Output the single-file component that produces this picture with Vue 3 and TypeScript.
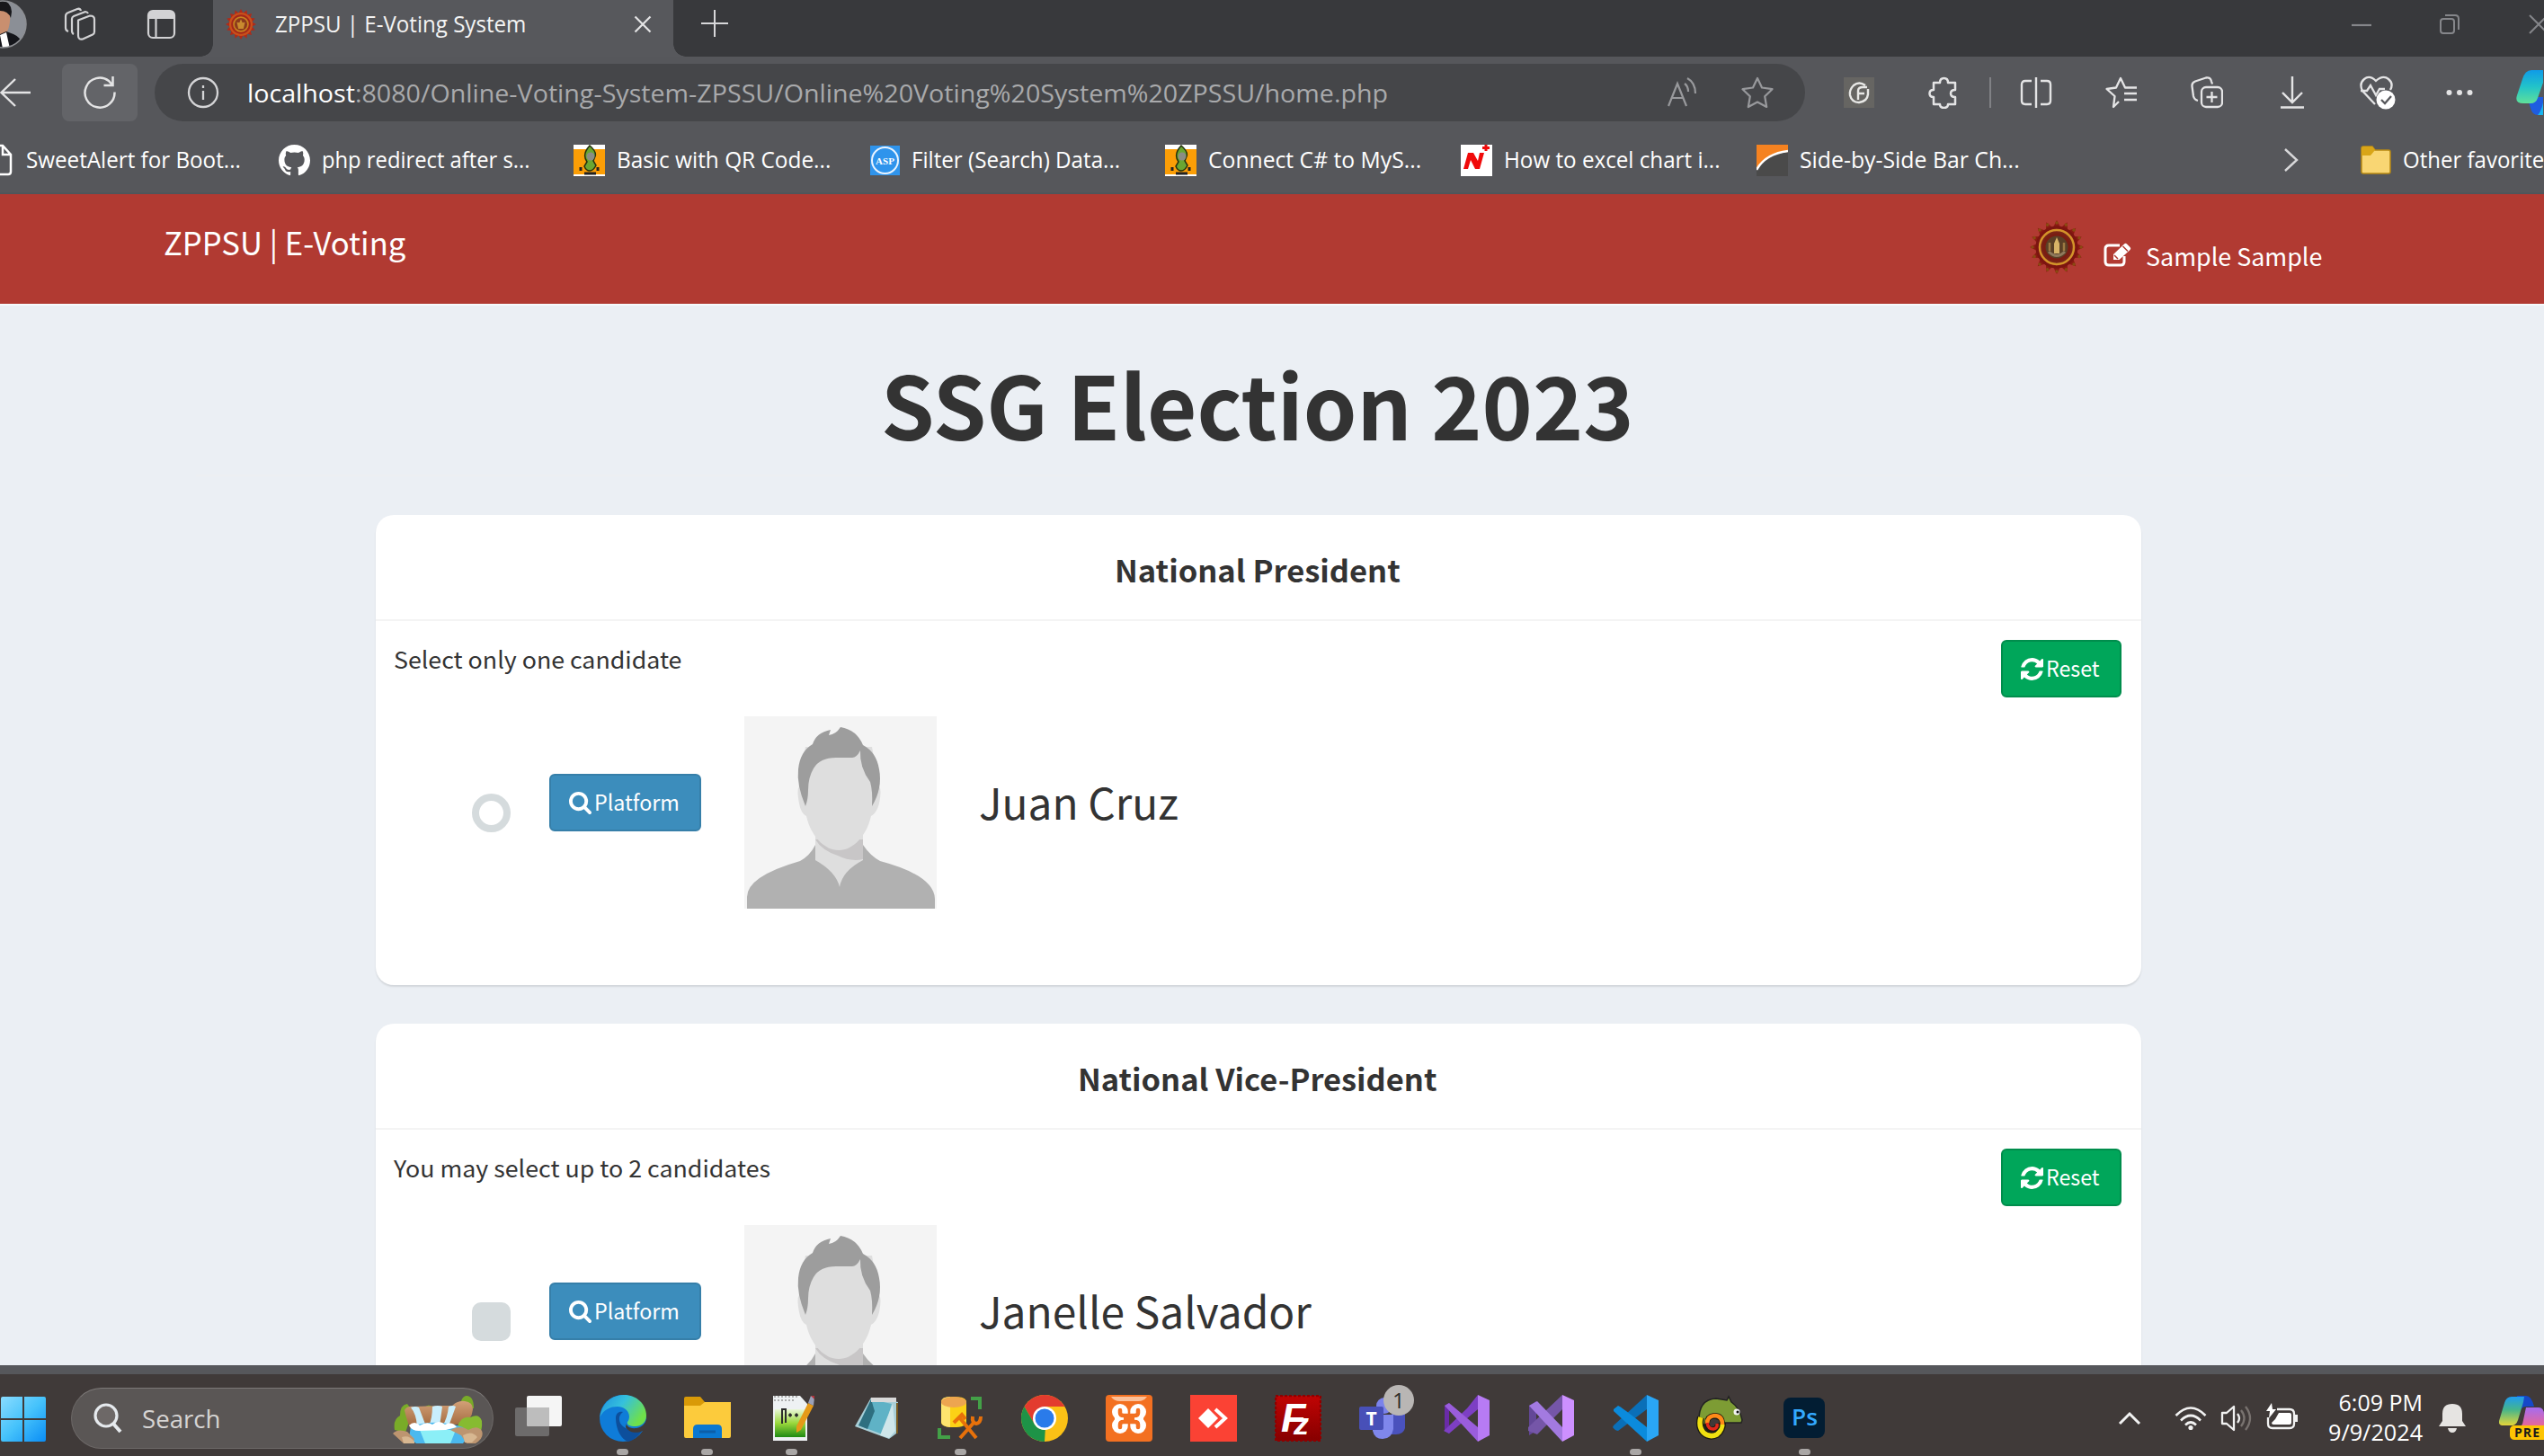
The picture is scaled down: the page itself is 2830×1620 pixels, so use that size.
<script setup lang="ts">
interface Bookmark {
  icon: string
  label: string
  width: number
  gap: number
}

interface Position {
  title: string
  titleWidth: number
  hint: string
  hintWidth: number
  candidate: string
  nameWidth: number
  multiple: boolean
}

const bookmarks: Bookmark[] = [
  { icon: 'doc', label: 'SweetAlert for Boot...', width: 239, gap: 42 },
  { icon: 'github', label: 'php redirect after s...', width: 232, gap: 49 },
  { icon: 'source', label: 'Basic with QR Code...', width: 238, gap: 43 },
  { icon: 'asp', label: 'Filter (Search) Data...', width: 232, gap: 50 },
  { icon: 'source', label: 'Connect C# to MyS...', width: 237, gap: 44 },
  { icon: 'news', label: 'How to excel chart i...', width: 241, gap: 40 },
  { icon: 'bars', label: 'Side-by-Side Bar Ch...', width: 245, gap: 0 },
]

const positions: Position[] = [
  {
    title: 'National President',
    titleWidth: 318,
    hint: 'Select only one candidate',
    hintWidth: 320,
    candidate: 'Juan Cruz',
    nameWidth: 222,
    multiple: false,
  },
  {
    title: 'National Vice-President',
    titleWidth: 399,
    hint: 'You may select up to 2 candidates',
    hintWidth: 419,
    candidate: 'Janelle Salvador',
    nameWidth: 370,
    multiple: true,
  },
]

const cogTeeth = Array.from({ length: 16 }, (_, i) => i * 22.5)

// Condenses or widens a label so that it takes exactly the given width.
const vFit = {
  mounted(el: HTMLElement, binding: { value: number }) {
    const natural = el.offsetWidth
    if (!natural) return
    el.style.transform = `scaleX(${binding.value / natural})`
    el.style.marginRight = `${binding.value - natural}px`
  },
}
</script>

<template>
  <div class="screen">
    <!-- tab strip -->
    <div class="tabstrip">
      <svg class="avatar" width="34" height="56" viewBox="0 0 34 56">
        <defs><clipPath id="av"><circle cx="3" cy="28" r="26" /></clipPath></defs>
        <g clip-path="url(#av)">
          <rect width="34" height="56" fill="#8b8f96" />
          <path d="M0 4q10 0 11 12q1 12-3 20l-8 6z" fill="#c98f6f" />
          <path d="M0 2q12-1 13 12l-1 7q-3-8-12-8z" fill="#17171a" />
          <path d="M0 39l7-3 8 3q10 4 12 17H0z" fill="#15161b" />
          <path d="M0 40l7-3 4 18H3z" fill="#fff" />
        </g>
        <circle cx="3" cy="28" r="26" fill="none" stroke="#8d8f93" stroke-width="1.5" />
      </svg>
      <svg class="ts-work" width="38" height="38" viewBox="0 0 38 38" fill="none" stroke="#d2d2d4" stroke-width="2.2" stroke-linejoin="round">
        <path d="M17 14.500l13-5q5 0 5 4v14q0 2-2 3l-11 5q-5 1-5-4z" />
        <path d="M12 30q-2-1-2-4V13q0-2 2-3l13-5q2 0 3 2" />
        <path d="M6 27q-3-1-3-4V10q0-3 3-4l10-4q3-1 4 2" />
      </svg>
      <svg class="ts-side" width="34" height="34" viewBox="0 0 34 34">
        <rect x="2" y="2" width="29" height="30" rx="5" fill="none" stroke="#d2d2d4" stroke-width="2.2" />
        <path d="M2 11V7q0-5 5-5h19q5 0 5 5v4z" fill="#d2d2d4" />
        <path d="M10.500 11v21" stroke="#d2d2d4" stroke-width="2.200" />
      </svg>
      <div class="tab">
        <svg class="favicon" width="34" height="34" viewBox="-30 -30 60 60">
          <path v-for="a in cogTeeth" :key="a" d="M-5-21L0-30 5-21z" fill="#b02a18" :transform="`rotate(${a})`" />
          <circle r="21" fill="#a3271a" stroke="#c8501b" stroke-width="4" />
          <circle r="14" fill="#8b3a1c" stroke="#c8821f" stroke-width="3" />
          <path d="M-5 9L-8-4-3-3 0-10 3-3 8-4 5 9z" fill="#c98b2f" />
        </svg>
        <span v-fit="279" class="tab-title">ZPPSU | E-Voting System</span>
        <svg class="tab-close" width="20" height="20" viewBox="0 0 20 20" stroke="#e4e4e5" stroke-width="2.2"><path d="M1.500 1.500l17 17M18.500 1.500l-17 17" /></svg>
      </div>
      <svg class="ts-plus" width="30" height="30" viewBox="0 0 30 30" stroke="#d8d8da" stroke-width="2"><path d="M0 15h30M15 0v30" /></svg>
      <div class="win">
        <svg width="22" height="24" viewBox="0 0 22 24" stroke="#85868a" stroke-width="2.200"><path d="M0 13h22" /></svg>
        <svg width="24" height="24" viewBox="0 0 24 24" fill="none" stroke="#85868a" stroke-width="2"><rect x="2" y="6" width="15" height="16" rx="3" /><path d="M7 2h11q4 0 4 4v12" /></svg>
        <svg width="24" height="24" viewBox="0 0 24 24" stroke="#85868a" stroke-width="2"><path d="M2 2l20 20M22 2L2 22" /></svg>
      </div>
    </div>

    <!-- address row -->
    <div class="toolbar">
      <svg class="back" width="34" height="34" viewBox="0 0 34 34" fill="none" stroke="#e4e4e5" stroke-width="2.400"><path d="M34 17H1M17 2L1.500 17 17 32" /></svg>
      <div class="reload">
        <svg width="38" height="38" viewBox="0 0 38 38" fill="none" stroke="#e4e4e5" stroke-width="2.500"><path d="M35.500 18.500A16.500 16.500 0 1 1 29 6l4 4.500M33.500 1v10H23.500" /></svg>
      </div>
      <div class="address">
        <svg class="info" width="36" height="36" viewBox="0 0 36 36" fill="none" stroke="#d5d5d7" stroke-width="2.300"><circle cx="18" cy="18" r="16" /><path d="M18 16v10M18 10v3" /></svg>
        <span v-fit="1269" class="url"><b>localhost</b>:8080/Online-Voting-System-ZPSSU/Online%20Voting%20System%20ZPSSU/home.php</span>
        <svg class="aloud" width="34" height="34" viewBox="0 0 34 34" fill="none" stroke="#98999c" stroke-width="2.200"><path d="M1 32L11 7l10 25M5 23h12M19 7q4 3 4 9M22 1q9 5 9 17" /></svg>
        <svg class="star" width="36" height="36" viewBox="0 0 36 36" fill="none" stroke="#98999c" stroke-width="2.200" stroke-linejoin="round"><path d="M18 2l5 10.500 11.500 1.700-8.300 8 2 11.800L18 28.500 7.800 34l2-11.800-8.300-8L13 12.500z" /></svg>
      </div>
      <div class="tools">
        <div class="tool"><svg width="34" height="34" viewBox="0 0 34 34"><rect width="34" height="34" fill="#666562" /><path d="M24 9Q17 4 11 9q-5 5-4 11 2 8 10 8 9-1 10-9v-6M16 25V15q0-4 5-4h5M16 18h7" fill="none" stroke="#e8e8e6" stroke-width="2.400" /></svg></div>
        <div class="tool"><svg width="36" height="36" viewBox="0 0 36 36" fill="none" stroke="#e4e4e5" stroke-width="2.500" stroke-linejoin="round"><path d="M6 7h7q0-5 4.500-5T22 7h8v8q-5 0-5 4t5 4v8h-8q0 4-4.500 4T13 31H6v-8q-4.500 0-4.500-4T6 15z" /></svg></div>
        <div class="vsep"></div>
        <div class="tool"><svg width="36" height="36" viewBox="0 0 36 36" fill="none" stroke="#e4e4e5" stroke-width="2.400"><path d="M13 5H6Q2 5 2 9v18q0 4 4 4h7M18 1v34M23 5h7q4 0 4 4v18q0 4-4 4h-7" /></svg></div>
        <div class="tool"><svg width="38" height="36" viewBox="0 0 38 36" fill="none" stroke="#e4e4e5" stroke-width="2.300" stroke-linejoin="round"><path d="M16 28l-6 6 1.500-12-9-8L13 12.500 18 2l5 10.500h13M22 19h14M22 26h14" /></svg></div>
        <div class="tool"><svg width="36" height="36" viewBox="0 0 36 36" fill="none" stroke="#e4e4e5" stroke-width="2.300"><rect x="12" y="12" width="23" height="22" rx="5" /><path d="M23.500 17v12M17.500 23h12M8 27q-4-1-5-5L1.500 11Q1 7 5 5.500L17 1.500q5-1 6 4l1 3" /></svg></div>
        <div class="tool"><svg width="28" height="36" viewBox="0 0 28 36" fill="none" stroke="#e4e4e5" stroke-width="2.400"><path d="M14 0v29M3 18l11 11 11-11M1 34.500h26" /></svg></div>
        <div class="tool"><svg width="40" height="38" viewBox="0 0 40 38" fill="none" stroke="#e4e4e5" stroke-width="2.300"><path d="M17 32L3 17q-4-8 2-13t13 2q8-7 14-2t2 12" /><path d="M1 17h7l4-6 6 11 4-7h6" /><circle cx="29" cy="27" r="10.500" fill="#fff" stroke="none" /><path d="M24 27l4 4 7-8" stroke="#57585c" /></svg></div>
        <div class="tool last"><svg width="30" height="8" viewBox="0 0 30 8" fill="#e4e4e5"><circle cx="3.500" cy="4" r="3" /><circle cx="15" cy="4" r="3" /><circle cx="26.500" cy="4" r="3" /></svg></div>
        <svg class="copilot" width="30" height="50" viewBox="0 0 30 50">
          <defs>
            <linearGradient id="cp1" x1="0" y1="0" x2="0" y2="1"><stop offset="0" stop-color="#0f9be8" /><stop offset=".5" stop-color="#22c3c9" /><stop offset="1" stop-color="#5fe09a" /></linearGradient>
          </defs>
          <path d="M12 30h18v20h-6q-6 0-8-8z" fill="#1f5de0" /><path d="M24 50q4-4 6-14v14z" fill="#18b6ee" />
          <path d="M30 0H17Q10 0 7 10L1 28q-3 9 7 9h8q6 0 8-6l6-17z" fill="url(#cp1)" />
        </svg>
      </div>
    </div>

    <!-- bookmarks -->
    <div class="bookmarks">
      <template v-for="(b, i) in bookmarks" :key="i">
        <svg v-if="b.icon === 'doc'" class="bm-icon" width="16" height="36" viewBox="0 0 16 36" fill="none" stroke="#fff" stroke-width="2.500"><path d="M0 2h3l9 10v19q0 3-3 3H0M3 2v10h9" /></svg>
        <svg v-else-if="b.icon === 'github'" class="bm-icon" width="35" height="35" viewBox="0 0 16 16" fill="#fff"><path d="M8 0C3.580 0 0 3.580 0 8c0 3.540 2.290 6.530 5.470 7.590.4.070.55-.17.55-.38 0-.19-.01-.82-.01-1.490-2.010.37-2.530-.49-2.690-.94-.09-.23-.48-.94-.82-1.130-.28-.15-.68-.52-.01-.53.63-.01 1.080.58 1.230.82.72 1.210 1.870.87 2.330.66.070-.52.28-.87.51-1.070-1.780-.2-3.640-.89-3.640-3.950 0-.87.31-1.590.82-2.150-.08-.2-.36-1.020.08-2.120 0 0 .67-.21 2.200.82.64-.18 1.320-.27 2-.27s1.360.09 2 .27c1.530-1.040 2.200-.82 2.200-.82.44 1.100.16 1.920.08 2.120.51.56.82 1.270.82 2.150 0 3.070-1.870 3.750-3.650 3.950.29.25.54.73.54 1.480 0 1.070-.01 1.930-.01 2.200 0 .21.15.46.55.38A8.010 8.010 0 0 0 16 8c0-4.420-3.580-8-8-8z" /></svg>
        <svg v-else-if="b.icon === 'source'" class="bm-icon" width="35" height="35" viewBox="0 0 35 35">
          <rect width="35" height="35" fill="#fb9e06" /><path d="M0 0h35v5H0zM0 33h35v2H0z" fill="#fff" />
          <path d="M18 1q8 7 6 12l-2 5 3 5q-3 6-7 6t-6-5l3-5q-6-8 3-18z" fill="#6aa632" stroke="#23300f" stroke-width="1.500" />
          <circle cx="19" cy="13" r="4.500" fill="#8b8d84" /><path d="M8 25v4M27 25v4M12 32h13" stroke="#222" stroke-width="3" />
        </svg>
        <svg v-else-if="b.icon === 'asp'" class="bm-icon" width="33" height="33" viewBox="0 0 33 33"><rect width="33" height="33" fill="#2f94ec" /><circle cx="16.500" cy="16.500" r="14.500" fill="none" stroke="#e9f4ff" stroke-width="2" /><text x="16.500" y="20.500" text-anchor="middle" font-family="Liberation Serif, serif" font-weight="700" font-size="11" fill="#fff">ASP</text></svg>
        <svg v-else-if="b.icon === 'news'" class="bm-icon" width="35" height="35" viewBox="0 0 35 35"><rect width="35" height="35" fill="#fff" /><path d="M3 27L8 9h6l5 9 2-9h5l-5 18h-5l-5-10-3 10z" fill="#f00a0a" /><path d="M28 0v7M24 3.500h8" stroke="#f00a0a" stroke-width="3" /></svg>
        <svg v-else class="bm-icon" width="35" height="35" viewBox="0 0 35 35"><rect width="35" height="35" fill="#4a4a4a" /><path d="M0 0h35v8Q12 10 0 28z" fill="#f58220" /><path d="M0 28Q10 10 35 7" fill="none" stroke="#fff" stroke-width="2.500" /></svg>
        <span v-fit="b.width" class="bm-label">{{ b.label }}</span>
        <i class="bm-gap" :style="{ width: b.gap + 'px' }"></i>
      </template>
      <svg class="bm-more" width="18" height="28" viewBox="0 0 18 28" fill="none" stroke="#d8d8da" stroke-width="2.400"><path d="M2 2l13 12L2 26" /></svg>
      <div class="bm-sep"></div>
      <svg class="bm-folder" width="34" height="32" viewBox="0 0 34 32"><path d="M1 3q0-2 2-2h10l3 4h15q2 0 2 2v22q0 2-2 2H3q-2 0-2-2z" fill="#f9d673" stroke="#b98b13" stroke-width="1.500" /><path d="M1 3q0-2 2-2h10l3 4-5 6H1z" fill="#d9a517" /></svg>
      <span v-fit="169" class="bm-label">Other favorites</span>
    </div>

    <!-- page -->
    <div class="page">
      <header class="navbar">
        <span v-fit="269" class="brand">ZPPSU | E-Voting</span>
        <svg class="seal" width="60" height="60" viewBox="-30 -30 60 60">
          <g v-for="a in cogTeeth" :key="a" :transform="`rotate(${a})`"><path d="M-4-22L0-30 4-22z" fill="#8a1a12" /><circle cy="-27" r="1.800" fill="#8a4a12" /></g>
          <circle r="22" fill="#8d1c14" stroke="#7c1510" stroke-width="3" />
          <circle r="19" fill="#7a2417" stroke="#d3942a" stroke-width="2.500" />
          <circle r="14" fill="#5a4026" stroke="#7b1d12" stroke-width="3" />
          <path d="M-3 7V-4L0-11 3-4V7z" fill="#d8b467" /><path d="M-9 5Q0 14 9 5" fill="none" stroke="#8f7a5c" stroke-width="3" />
          <path d="M-8-5v9M8-5v9" stroke="#9c7a42" stroke-width="2.500" />
        </svg>
        <svg class="edit" width="32" height="27" viewBox="0 0 32 27"><path d="M23 15v6q0 4-4 4H6q-4 0-4-4V7q0-4 4-4h12" fill="none" stroke="#fff" stroke-width="3" /><path d="M11 19v-6L23 1.500q1.500-1.500 3 0l3.500 3.500q1.500 1.500 0 3L17.500 19z" fill="#fff" /><path d="M21.500 4l5.500 5.500M12 14l4 4" stroke="#b13a32" stroke-width="1.500" /></svg>
        <span v-fit="196" class="user">Sample Sample</span>
      </header>

      <main class="content">
        <h1><span v-fit="837">SSG Election 2023</span></h1>
        <div class="rule"></div>
        <section v-for="p in positions" :key="p.title" class="card">
          <h3><span v-fit="p.titleWidth">{{ p.title }}</span></h3>
          <div class="body">
            <div class="hint-row">
              <span v-fit="p.hintWidth" class="hint">{{ p.hint }}</span>
              <button class="btn reset">
                <svg width="25" height="25" viewBox="0 0 1536 1536" fill="#fff"><path d="M1511 928q0 5-1 7-64 268-268 434.500t-478 166.500q-146 0-282.500-55t-243.500-157l-129 129q-19 19-45 19t-45-19-19-45v-448q0-26 19-45t45-19h448q26 0 45 19t19 45-19 45l-137 137q71 66 161 102t187 36q134 0 250-65t186-179q11-17 53-117 8-23 30-23h192q13 0 22.500 9.500t9.500 22.500zm25-800v448q0 26-19 45t-45 19h-448q-26 0-45-19t-19-45 19-45l138-138q-148-137-349-137-134 0-250 65t-186 179q-11 17-53 117-8 23-30 23h-199q-13 0-22.500-9.500t-9.500-22.500v-7q65-268 270-434.500t480-166.500q146 0 284 55.500t245 156.500l130-129q19-19 45-19t45 19 19 45z" /></svg>
                <span v-fit="60">Reset</span>
              </button>
            </div>
            <div class="candidate">
              <span class="pick" :class="{ square: p.multiple }"></span>
              <button class="btn platform">
                <svg width="25" height="25" viewBox="64 128 1664 1664" fill="#fff"><path d="M1216 832q0-185-131.500-316.500t-316.500-131.500-316.500 131.500-131.500 316.500 131.500 316.500 316.500 131.500 316.500-131.500 131.500-316.500zm512 832q0 52-38 90t-90 38q-54 0-90-38l-343-342q-179 124-399 124-143 0-273.500-55.500t-225-150-150-225-55.500-273.500 55.500-273.500 150-225 225-150 273.500-55.500 273.500 55.500 225 150 150 225 55.500 273.500q0 220-124 399l343 343q37 37 37 90z" /></svg>
                <span v-fit="95">Platform</span>
              </button>
              <svg class="photo" width="214" height="214" viewBox="0 0 214 214">
                <rect width="214" height="214" fill="#f4f4f4" />
                <path d="M79 130h53v32l-26 34-27-36z" fill="#dedede" />
                <path d="M79 137h53v22q-14 3-28-4-18-6-25-18z" fill="#c8c6c7" />
                <path d="M61 78q-3 4 0 19 2 11 8 14c5 22 20 38 36 38s31-16 36-38q6-3 9-14 3-15 0-19l-8-44H68z" fill="#dedede" />
                <path d="M68 100Q58 76 60 59 62 39 76 31 80 18 96 15l-2 6q8-1 13-9 18 3 25 20 15 8 18 27 4 21-8 41 1-17-2-27-12-16-11-35-4 8-9 8H102Q84 46 77 58q-6 10-6 24 0 10-3 18z" fill="#9d9d9d" />
                <path d="M3 214v-13Q3 178 62 161q11-6 17-18v17q23 13 27 30 3-18 26-30v-17q8 12 19 18 60 16 61 42v11z" fill="#b1b1b1" />
              </svg>
              <span v-fit="p.nameWidth" class="name">{{ p.candidate }}</span>
            </div>
          </div>
        </section>
      </main>
    </div>

    <!-- taskbar -->
    <footer class="taskbar">
      <svg class="start" width="52" height="52" viewBox="0 0 52 52">
        <defs><linearGradient id="wn" x1="0" y1="0" x2="1" y2="1"><stop offset="0" stop-color="#8adcff" /><stop offset=".5" stop-color="#45c2fb" /><stop offset="1" stop-color="#0a8df5" /></linearGradient></defs>
        <path d="M3 1h22v24H1V3q0-2 2-2zM27 1h22q2 0 2 2v22H27zM1 27h24v24H3q-2 0-2-2zM27 27h24v22q0 2-2 2H27z" fill="url(#wn)" />
      </svg>
      <div class="search">
        <svg width="32" height="34" viewBox="0 0 32 34" fill="none" stroke="#e6eaee" stroke-width="3.200"><circle cx="14" cy="14" r="12" fill="#6d6867" /><path d="M22 23l8 9" stroke-width="4" /></svg>
        <span v-fit="88">Search</span>
        <svg class="falls" width="100" height="54" viewBox="0 0 100 54">
          <defs><linearGradient id="rk" x1="0" y1="0" x2="0" y2="1"><stop offset="0" stop-color="#d2a077" /><stop offset="1" stop-color="#9c6238" /></linearGradient></defs>
          <path d="M34 14q6-7 12 0zM74 14q2-14 8-14 8 0 8 14zM2 38q-2-12 6-16 0-12 8-13l6 8-8 24z" fill="#79ab28" />
          <path d="M13 16q3-5 10-4l33-1h10q6-6 14-5 9 1 9 9-1 12-12 16L20 38q-5-12-7-22z" fill="url(#rk)" />
          <path d="M72 34q4-12 14-10 10-5 13 4 1 12-4 14H76z" fill="#86bb31" />
          <path d="M20 13q5-2 9 0l8 21H27q-1-14-7-21zM44 12q6-2 11 0l-3 22H40q4-10 4-22zM62 12q5-2 8 0l-8 22h-7q6-10 7-22z" fill="#c9eefc" />
          <path d="M20 34q28-9 58 1l6 10-6 8H26L18 47z" fill="#4bb9ee" /><path d="M30 38h40l-6 15H36z" fill="#8beff7" />
          <path d="M18 33q6-6 12 0 8-5 14-1 7-6 14 0 8-4 13 3l-12 3-30 1q-8 0-11-6z" fill="#fff" />
          <path d="M0 42q5-6 16-2l8 8-2 5H12zM64 38q12-6 20 0 10-6 15 1 3 8-7 14H82l-6-9z" fill="#bd9570" /><path d="M10 46q8-3 14 5v2H12zM78 44q10-6 16 2l-6 6h-8z" fill="#d7b791" />
        </svg>
      </div>

      <div class="apps">
        <div class="app"><svg width="52" height="52" viewBox="0 0 52 52"><rect x="0" y="14" width="38" height="32" rx="2" fill="#6d6b6b" /><rect x="13" y="1" width="39" height="34" rx="2" fill="#f5f5f5" /><path d="M13 14h25v21H15q-2 0-2-2z" fill="#bdbdbd" /></svg></div>
        <div class="app run">
          <svg width="52" height="52" viewBox="0 0 52 52">
            <defs><linearGradient id="eg" x1="0" y1="0" x2="1" y2=".5"><stop offset="0" stop-color="#1d8fe0" /><stop offset=".5" stop-color="#35c1dd" /><stop offset="1" stop-color="#6fe04a" /></linearGradient></defs>
            <circle cx="26" cy="26" r="26" fill="#0f7cd8" />
            <path d="M2 18C6 6 16 0 27 0c14 0 25 10 25 23 0 8-6 12-12 12-7 0-10-2-9-5 4-4 3-16-11-17C12 13 5 16 0 25z" fill="url(#eg)" />
            <path d="M18 26c0-6 4-8 8-7-6 4-5 12 0 16 6 5 16 6 23 2-3 6-9 13-17 15-8-2-14-14-14-26z" fill="#0d4f9c" />
            <path d="M30 31c-1 3 3 7 11 6 6-1 10-5 11-10v11l-4 2c-8 4-16 1-19-4z" fill="#403a39" />
          </svg>
        </div>
        <div class="app run"><svg width="52" height="52" viewBox="0 0 52 52"><path d="M0 4q0-2 2-2h16l5 6v6H0z" fill="#d99a07" /><path d="M0 12h18l5-4h29v38q0 2-2 2H2q-2 0-2-2z" fill="#fccb3c" /><path d="M10 48V38q0-5 5-5h22q5 0 5 5v10z" fill="#0b78d0" /><path d="M17 41h18" stroke="#0c5ea8" stroke-width="3" /></svg></div>
        <div class="app run">
          <svg width="52" height="52" viewBox="0 0 52 52"><defs><linearGradient id="np" x1="0" y1="0" x2="0" y2="1"><stop offset="0" stop-color="#e9f7d8" /><stop offset=".5" stop-color="#9ad83c" /><stop offset="1" stop-color="#1f8a12" /></linearGradient></defs><path d="M5 1h30l8 9v41H5z" fill="#eef1f3" /><path d="M7 16h34v31H7z" fill="url(#np)" /><path d="M6 2h28M6 6h24" stroke="#999" stroke-width="1.500" stroke-dasharray="2 2" /><path d="M15 32V16h4v15M22 22.500h4M29 22.500h4M24 20.500v4M31 20.500v4" stroke="#2c2c2c" stroke-width="2" fill="none" /><path d="M44 9l6 3-14 27-5 3 0-7z" fill="#e59a18" /><path d="M44 9l3-8 4 2-1 9z" fill="#9aa0b8" /><path d="M47 1h4v4z" fill="#b2323a" /></svg>
        </div>
        <div class="app"><svg width="52" height="52" viewBox="0 0 52 52"><path d="M20 3l30 5-2 35-8 6-38-14z" fill="#a9cfd8" /><path d="M20 5l23 5-10 34L6 34z" fill="#5fb2c6" /><path d="M6 34L20 5l4 13-8 20z" fill="#2e6f80" /><path d="M44 10l3 30-7 8-10-3z" fill="#cfe6ea" /><path d="M20 3h28v5H20z" fill="#d9d9d9" /><path d="M49 9v34" stroke="#7a5a20" stroke-width="2" /></svg></div>
        <div class="app run"><svg width="52" height="52" viewBox="0 0 52 52"><path d="M5 8q0-6 14-6t14 6v22q0 6-14 6T5 30z" fill="#fcd116" /><path d="M5 8q0-6 10-6v34Q5 35 5 30z" fill="#fde36e" /><ellipse cx="19" cy="8" rx="14" ry="6" fill="#eda550" /><path d="M38 4h10v12M3 37v10h12" fill="none" stroke="#43a047" stroke-width="4" /><path d="M26 26l18 22M42 30L26 48" stroke="#e8710a" stroke-width="4" fill="none" /><path d="M19 31l9-9 4 5M40 24q-1 7 4 8 5-1 5-8" stroke="#e8710a" stroke-width="4" fill="none" /></svg></div>
        <div class="app"><svg width="52" height="52" viewBox="0 0 52 52"><circle cx="26" cy="26" r="26" fill="#fbc116" /><path d="M3.500 13A26 26 0 0 1 48.500 13H26L14.700 32.500z" fill="#e33b2e" /><path d="M3.500 13l11.300 19.500q5 7 12 6L26 52A26 26 0 0 1 3.500 13z" fill="#1e9347" /><circle cx="26" cy="26" r="13" fill="#fff" /><circle cx="26" cy="26" r="10.500" fill="#2a7bea" /></svg></div>
        <div class="app">
          <svg width="52" height="52" viewBox="0 0 52 52"><rect width="52" height="52" rx="4" fill="#f37021" /><path d="M6 2h40q-3 5-10 5H16Q9 7 6 2z" fill="#fbc09a" />
            <g fill="#fff"><circle cx="16" cy="19" r="9" /><circle cx="36" cy="19" r="9" /><circle cx="16" cy="34" r="9" /><circle cx="36" cy="34" r="9" /><rect x="10" y="20" width="32" height="13" /></g>
            <path d="M16 17v3q0 3 4 3h12q4 0 4-3v-3M16 36v-3q0-3 4-3h12q4 0 4 3v3" fill="none" stroke="#f37021" stroke-width="4.500" stroke-linecap="round" /><path d="M26 13v9M26 31v9" stroke="#f37021" stroke-width="2.500" />
            <path d="M20 26.500h12" stroke="#f37021" stroke-width="5" />
          </svg>
        </div>
        <div class="app"><svg width="52" height="52" viewBox="0 0 52 52"><rect width="52" height="52" fill="#fb4234" /><path d="M9 26l11-11 11 11-11 11z" fill="#fff" /><path d="M28 16l11 10-11 10" fill="none" stroke="#fff" stroke-width="4" /></svg></div>
        <div class="app"><svg width="52" height="52" viewBox="0 0 52 52"><defs><linearGradient id="fz" x1="0" y1="0" x2="0" y2="1"><stop offset="0" stop-color="#c00404" /><stop offset="1" stop-color="#860000" /></linearGradient></defs><rect x="1" y="1" width="50" height="50" fill="url(#fz)" stroke="#8d0000" stroke-width="2.500" stroke-dasharray="3 2" /><text x="7" y="41" font-family="Liberation Sans, sans-serif" font-size="45" font-weight="700" font-style="italic" fill="#fff">F<tspan x="21" dy="3" font-size="34">z</tspan></text></svg></div>
        <div class="app">
          <svg width="52" height="52" viewBox="0 0 52 52"><circle cx="28" cy="12" r="9" fill="#7b83eb" /><path d="M36 21h15v16q-2 7-10 7h-5z" fill="#4a52bd" /><path d="M15 22h23v16q-2 11-12 11-9 0-11-9z" fill="#7f87ec" /><rect x="0" y="13" width="27" height="26" rx="2" fill="#4850b8" /><text x="13.500" y="34" text-anchor="middle" font-family="Open Sans, sans-serif" font-size="21" font-weight="700" fill="#fff">T</text></svg>
          <span class="badge">1</span>
        </div>
        <div class="app"><svg width="52" height="52" viewBox="0 0 52 52"><path d="M1 12l5-3v34l-5-3z" fill="#6a2ba8" /><path d="M0 40l26-25L38 0v16L6 43z" fill="#7d3fc4" /><path d="M1 12l5-3 32 27v16z" fill="#9a5ddc" /><path d="M38 0l13 6v39l-13 7z" fill="#b77bf4" /></svg></div>
        <div class="app"><svg width="52" height="52" viewBox="0 0 52 52"><path d="M1 12l8-5v33l-8 5z" fill="#634797" /><path d="M0 36L38 0v16L10 44 0 40z" fill="#7556a8" /><path d="M1 12l9-5 28 29v16z" fill="#a37ae0" /><path d="M38 0l13 6v39l-13 7z" fill="#cd90ff" /></svg></div>
        <div class="app run"><svg width="52" height="52" viewBox="0 0 52 52"><path d="M1 34L38 0v16L6 40q-3 0-6-4z" fill="#0a6fb8" /><path d="M1 16l5-4q2 0 32 24v16L1 18z" fill="#0b8bdc" /><path d="M38 0l13 6v39l-13 7z" fill="#2aa6f5" /></svg></div>
        <div class="app">
          <svg width="52" height="52" viewBox="0 0 52 52">
            <path d="M3 30Q2 5 22 4l12 2 2-4 3 6q9 6 12 20l-1 3H30q-5-5-12-5-8 1-9 8z" fill="#7d9c34" stroke="#222" stroke-width="1.500" />
            <path d="M5 25q-3 10 3 17 7 6 15 2 6-5 6-13" fill="none" stroke="#1a1a10" stroke-width="8" />
            <path d="M5 25q-3 10 3 17 7 6 15 2 6-5 6-13" fill="none" stroke="#f0e010" stroke-width="5.500" />
            <path d="M29 33q0-10-9-10-8 1-8 9t8 6q5-2 3-6" fill="none" stroke="#1a1a10" stroke-width="6" />
            <path d="M29 33q0-10-9-10-8 1-8 9" fill="none" stroke="#ff8a18" stroke-width="4.500" />
            <path d="M12 31q1 7 7 7 5-1 4-6" fill="none" stroke="#e0281a" stroke-width="3.500" />
            <circle cx="45" cy="19" r="3.500" fill="#f3f3f3" /><circle cx="46" cy="19" r="1.500" fill="#111" />
          </svg>
        </div>
        <div class="app run"><svg width="52" height="52" viewBox="0 0 52 52"><rect x="3" y="3" width="46" height="45" rx="8" fill="#021d33" /><text x="12" y="34" font-family="Open Sans, sans-serif" font-size="25" font-weight="600" fill="#33a9ff" textLength="29" lengthAdjust="spacingAndGlyphs">Ps</text></svg></div>
      </div>

      <div class="tray">
        <svg width="26" height="16" viewBox="0 0 26 16" fill="none" stroke="#f2f2f2" stroke-width="3"><path d="M2 14L13 3l11 11" /></svg>
        <svg class="wifi" width="36" height="28" viewBox="0 0 36 28" fill="none" stroke="#f2f2f2" stroke-width="2.600"><path d="M1.500 11q16.500-17 33 0M7 16.500q11-11 22 0M12 21.500q6-6 12 0" /><circle cx="18" cy="24.500" r="2.600" fill="#f2f2f2" stroke="none" /></svg>
        <svg class="vol" width="36" height="32" viewBox="0 0 36 32" fill="none" stroke="#f2f2f2" stroke-width="2.300"><path d="M2 10h5l8-7v26l-8-7H2z" stroke-linejoin="round" /><path d="M19 11q4 5 0 10" /><path d="M23 7q7 9 0 18M28 3q10 13 0 26" stroke="#78726f" /></svg>
        <svg class="bat" width="36" height="30" viewBox="0 0 36 30" fill="none" stroke="#f2f2f2" stroke-width="2.300"><path d="M12 7h14q5 0 5 5v11q0 5-5 5H7q-5 0-5-5v-7" /><path d="M33 13v8" stroke-width="4" /><path d="M14 11h12q2 0 2 2v9q0 2-2 2H8q-2 0-2-2l4-4z" fill="#fff" stroke="none" /><path d="M6 0L0 9h4l-1 8 8-10H7z" fill="#fff" stroke="none" /></svg>
        <div class="clock"><span v-fit="93">6:09 PM</span><span v-fit="105">9/9/2024</span></div>
        <svg class="bell" width="30" height="34" viewBox="0 0 30 34" fill="#e6e4e2"><path d="M15 1q11 0 11 11v8l4 6H0l4-6v-8Q4 1 15 1zM10 28h10q-1 5-5 5t-5-5z" /></svg>
        <svg class="pre" width="50" height="50" viewBox="0 0 50 50">
          <defs>
            <linearGradient id="pr1" x1="0" y1="0" x2="0" y2="1"><stop offset="0" stop-color="#1f9bf0" /><stop offset=".45" stop-color="#45b58c" /><stop offset="1" stop-color="#e3d53a" /></linearGradient>
            <linearGradient id="pr2" x1="0" y1="0" x2="0" y2="1"><stop offset="0" stop-color="#a56cf0" /><stop offset="1" stop-color="#f2668a" /></linearGradient>
          </defs>
          <path d="M20 0h10q6 0 9 12h-9q-6 0-8 8z" fill="#1548c8" />
          <path d="M28 1H14Q8 1 6 8L0 28q-1 5 5 5h9q5 0 7-6l6-20q1-6 1-6z" fill="url(#pr1)" />
          <path d="M30 13h14q6 0 6 8v16H20q6-2 7-10z" fill="url(#pr2)" />
          <rect x="12" y="33" width="42" height="16" rx="5" fill="#fdc403" />
          <text x="17" y="46" font-family="Open Sans, sans-serif" font-size="14" font-weight="700" fill="#1a1a1a" textLength="28">PRE</text>
        </svg>
      </div>
    </footer>
  </div>
</template>

<style>
html,
body {
  margin: 0;
  overflow: hidden;
}
</style>

<style scoped>
.screen {
  width: 2830px;
  height: 1620px;
  overflow: hidden;
  display: flex;
  flex-direction: column;
  background: #ebeff4;
  font-family: 'Open Sans', 'Noto Sans', sans-serif;
}
.screen * {
  box-sizing: border-box;
}
svg {
  flex: none;
  display: block;
}
span {
  display: inline-block;
  flex: none;
  white-space: pre;
  transform-origin: left center;
}

/* tab strip */
.tabstrip {
  height: 63px;
  flex: none;
  display: flex;
  align-items: center;
  padding-bottom: 9px;
  background: #38393c;
}
.ts-work {
  margin-left: 36px;
}
.ts-side {
  margin-left: 55px;
}
.tab {
  width: 512px;
  height: 63px;
  margin: 0 0 -9px 40px;
  padding: 0 24px 9px 14px;
  display: flex;
  align-items: center;
  background: #57585c;
  position: relative;
}
.tab::before,
.tab::after {
  content: '';
  position: absolute;
  bottom: 0;
  width: 14px;
  height: 14px;
}
.tab::before {
  left: -14px;
  background: radial-gradient(circle at 0 0, transparent 13.5px, #57585c 14px);
}
.tab::after {
  right: -14px;
  background: radial-gradient(circle at 100% 0, transparent 13.5px, #57585c 14px);
}
.tab-title {
  margin-left: 21px;
  font-size: 26px;
  line-height: 36px;
  padding-bottom: 2px;
  color: #f4f4f4;
}
.tab-close {
  margin-left: auto;
}
.ts-plus {
  margin: 0 0 3px 31px;
}
.win {
  margin: 0 -6px 0 auto;
  display: flex;
  gap: 75px;
}

/* address row */
.toolbar {
  height: 72px;
  flex: none;
  padding-top: 8px;
  display: flex;
  align-items: center;
  background: #56575b;
}
.reload {
  width: 84px;
  height: 64px;
  margin-left: 35px;
  border-radius: 8px;
  background: #636468;
  display: flex;
  align-items: center;
  justify-content: center;
}
.address {
  width: 1836px;
  height: 64px;
  margin-left: 19px;
  border-radius: 32px;
  background: #454649;
  display: flex;
  align-items: center;
}
.info {
  margin-left: 36px;
}
.url {
  margin-left: 31px;
  font-size: 28px;
  line-height: 64px;
  color: #a9aaac;
}
.url b {
  font-weight: 400;
  color: #fff;
}
.aloud {
  margin-left: 311px;
}
.star {
  margin-left: 48px;
}
.tools {
  display: flex;
  align-items: center;
  margin-left: 12px;
}
.tool {
  width: 95px;
  display: flex;
  justify-content: center;
}
.tool.last {
  width: 87px;
}
.vsep {
  width: 2px;
  height: 34px;
  margin: 0 2px 0 3px;
  background: #808185;
}
.copilot {
  margin-left: 20px;
}

/* bookmarks */
.bookmarks {
  height: 81px;
  flex: none;
  display: flex;
  align-items: center;
  padding-top: 7px;
  background: #56575b;
  border-bottom: 2px solid #50555a;
}
.bm-icon {
  margin-right: 13px;
}
.bm-label {
  font-size: 25px;
  line-height: 36px;
  padding-bottom: 3px;
  color: #fff;
}
.bm-gap {
  flex: none;
}
.bm-more {
  margin-left: 294px;
}
.bm-sep {
  width: 2px;
  height: 34px;
  margin: 0 31px 6px 37px;
  background: #808185;
}
.bm-folder {
  margin-right: 13px;
}

/* page */
.page {
  height: 1303px;
  flex: none;
  overflow: hidden;
  background: #ebeff4;
  font-family: 'Noto Sans CJK SC', 'Open Sans', sans-serif;
}
.navbar {
  height: 122px;
  padding: 0 247px 0 182px;
  display: flex;
  align-items: center;
  background: #b13a32;
  color: #fff;
}
.brand {
  font-size: 35px;
  line-height: 60px;
  margin-bottom: 17px;
}
.seal {
  margin: 0 0 4px auto;
}
.edit {
  margin: 13px 0 0 22px;
}
.user {
  margin: 15px 0 0 15px;
  font-size: 27px;
  line-height: 40px;
}
.content {
  border-top: 2px solid #f6fafc;
}
h1,
h3 {
  margin: 0;
  text-align: center;
  color: #333;
  display: flex;
  justify-content: center;
}
h1 {
  height: 188px;
  padding-right: 32px;
  font-size: 97px;
  line-height: 216px;
}
.rule {
  height: 2px;
  margin: 0 218px 43px;
  background: #edeff2;
}
.card {
  width: 1964px;
  height: 523px;
  margin: 0 0 43px 418px;
  border-radius: 20px;
  background: #fff;
  box-shadow: 0 2px 2px rgba(0, 0, 0, 0.1);
}
h3 {
  height: 118px;
  border-bottom: 2px solid #f4f4f4;
  padding-right: 2px;
  font-size: 33px;
  line-height: 122px;
}
.body {
  padding: 21px 22px 0 20px;
}
.hint-row {
  height: 85px;
  display: flex;
  justify-content: space-between;
  align-items: flex-start;
}
.hint {
  font-size: 26px;
  line-height: 42px;
  color: #333;
}
.btn {
  height: 64px;
  border-radius: 6px;
  border: 2px solid;
  padding: 0 0 0 20px;
  margin: 0;
  display: flex;
  align-items: center;
  gap: 3px;
  font-family: inherit;
  font-size: 24px;
  line-height: 36px;
  color: #fff;
}
.btn span {
  padding-bottom: 2px;
}
.reset {
  width: 134px;
  background: #00a65a;
  border-color: #008d4c;
}
.platform {
  width: 169px;
  margin: -22px 0 0 43px;
  background: #3c8dbc;
  border-color: #367fa9;
}
.candidate {
  display: flex;
  align-items: center;
  padding-left: 87px;
}
.pick {
  width: 43px;
  height: 43px;
  border: 8px solid #d5dbdd;
  border-radius: 50%;
}
.pick.square {
  background: #d5dbdd;
  border-radius: 10px;
}
.photo {
  margin-left: 48px;
}
.name {
  margin: -27px 0 0 47px;
  font-size: 48px;
  line-height: 70px;
  color: #333;
}

/* taskbar */
.taskbar {
  flex: none;
  height: 101px;
  border-top: 10px solid #56575b;
  background: #403a39;
  display: flex;
  align-items: flex-start;
}
.start {
  margin-top: 24px;
}
.search {
  width: 470px;
  height: 68px;
  margin: 15px 0 0 27px;
  padding: 0 11px 0 24px;
  border: 1px solid #6c6867;
  border-top-color: #7d7978;
  border-radius: 34px;
  background: #5a5655;
  display: flex;
  align-items: center;
}
.search span {
  margin-left: 22px;
  padding-top: 1px;
  font-size: 27px;
  line-height: 40px;
  color: #d6d4d3;
}
.falls {
  margin: 3px 0 0 auto;
}
.apps {
  display: flex;
  margin: 23px 0 0 3px;
}
.app {
  width: 93.9px;
  height: 68px;
  display: flex;
  flex-direction: column;
  align-items: center;
  gap: 8px;
  position: relative;
}
.run::after {
  content: '';
  width: 13px;
  height: 7px;
  border-radius: 4px;
  background: #aaa7a6;
}
.badge {
  position: absolute;
  left: 48px;
  top: -11px;
  width: 34px;
  height: 34px;
  border-radius: 50%;
  background: #b9b6b4;
  color: #2e2a29;
  font-size: 24px;
  line-height: 34px;
  text-align: center;
}
.tray {
  display: flex;
  align-items: center;
  height: 74px;
  margin: 12px 0 0 auto;
}
.wifi {
  margin-left: 37px;
}
.vol {
  margin-left: 15px;
}
.bat {
  margin: 0 0 4px 15px;
}
.clock {
  width: 105px;
  margin: 0 0 2px 33px;
  display: flex;
  flex-direction: column;
  align-items: flex-end;
  font-size: 25px;
  line-height: 33px;
  color: #fff;
}
.bell {
  margin-left: 18px;
}
.pre {
  margin-left: 37px;
}
</style>
